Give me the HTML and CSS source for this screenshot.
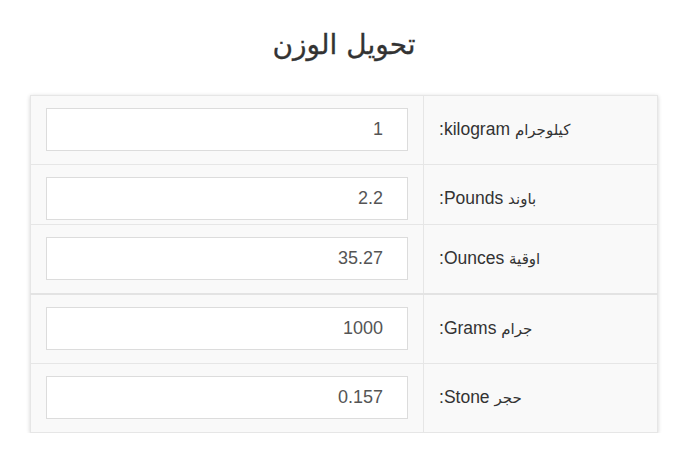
FILE: index.html
```html
<!DOCTYPE html>
<html lang="ar" dir="rtl">
<head>
<meta charset="utf-8">
<title>تحويل الوزن</title>
<link rel="stylesheet" href="styles.css">
</head>
<body>
<div class="wrap">
  <h1 class="title">تحويل الوزن</h1>
  <table class="conv">
    <tr>
      <td class="lbl"><span class="ar">كيلوجرام</span> kilogram:</td>
      <td class="fld"><input class="inp" type="text" value="1"></td>
    </tr>
    <tr class="short">
      <td class="lbl"><span class="ar">باوند</span> Pounds:</td>
      <td class="fld"><input class="inp" type="text" value="2.2"></td>
    </tr>
    <tr class="thick">
      <td class="lbl"><span class="ar">اوقية</span> Ounces:</td>
      <td class="fld"><input class="inp" type="text" value="35.27"></td>
    </tr>
    <tr>
      <td class="lbl"><span class="ar">جرام</span> Grams:</td>
      <td class="fld"><input class="inp" type="text" value="1000"></td>
    </tr>
    <tr>
      <td class="lbl"><span class="ar">حجر</span> Stone:</td>
      <td class="fld"><input class="inp" type="text" value="0.157"></td>
    </tr>
  </table>
</div>
</body>
</html>
```
FILE: styles.css
```css
html, body {
  margin: 0;
  padding: 0;
  background: #fff;
}
body {
  font-family: "Liberation Sans", "DejaVu Sans", sans-serif;
  color: #333;
}
.wrap {
  width: 628px;
  margin-right: 42px;
  padding-top: 22px;
}
.title {
  margin: 0;
  height: 73px;
  font-family: "DejaVu Sans", sans-serif;
  font-weight: normal;
  font-size: 28px;
  line-height: 46px;
  text-align: center;
  color: #333;
  -webkit-text-stroke: 0.3px #333;
}
.conv {
  width: 628px;
  border-collapse: collapse;
  background: #f9f9f9;
  box-shadow: 0 1px 4px rgba(0, 0, 0, 0.18);
}
.conv td {
  border: 1px solid #e6e6e6;
  padding: 12px 15px 13px;
  vertical-align: middle;
}
.conv tr.short td {
  padding-bottom: 4px;
}
.conv tr.thick td {
  border-bottom: 2px solid #e3e3e3;
}
.lbl {
  width: 206px;
  text-align: left;
  font-size: 17.5px;
  color: #333;
  white-space: nowrap;
}
.ar {
  font-family: "DejaVu Sans", sans-serif;
  font-size: 15px;
}
.fld {
  width: 362px;
}
.inp {
  display: block;
  box-sizing: border-box;
  width: 362px;
  height: 43px;
  margin: 0;
  border: 1px solid #dcdcdc;
  background: #fff;
  padding: 0 24px 0 12px;
  font-family: "Liberation Sans", sans-serif;
  font-size: 18px;
  color: #555;
  text-align: right;
  direction: ltr;
  outline: none;
}
```
